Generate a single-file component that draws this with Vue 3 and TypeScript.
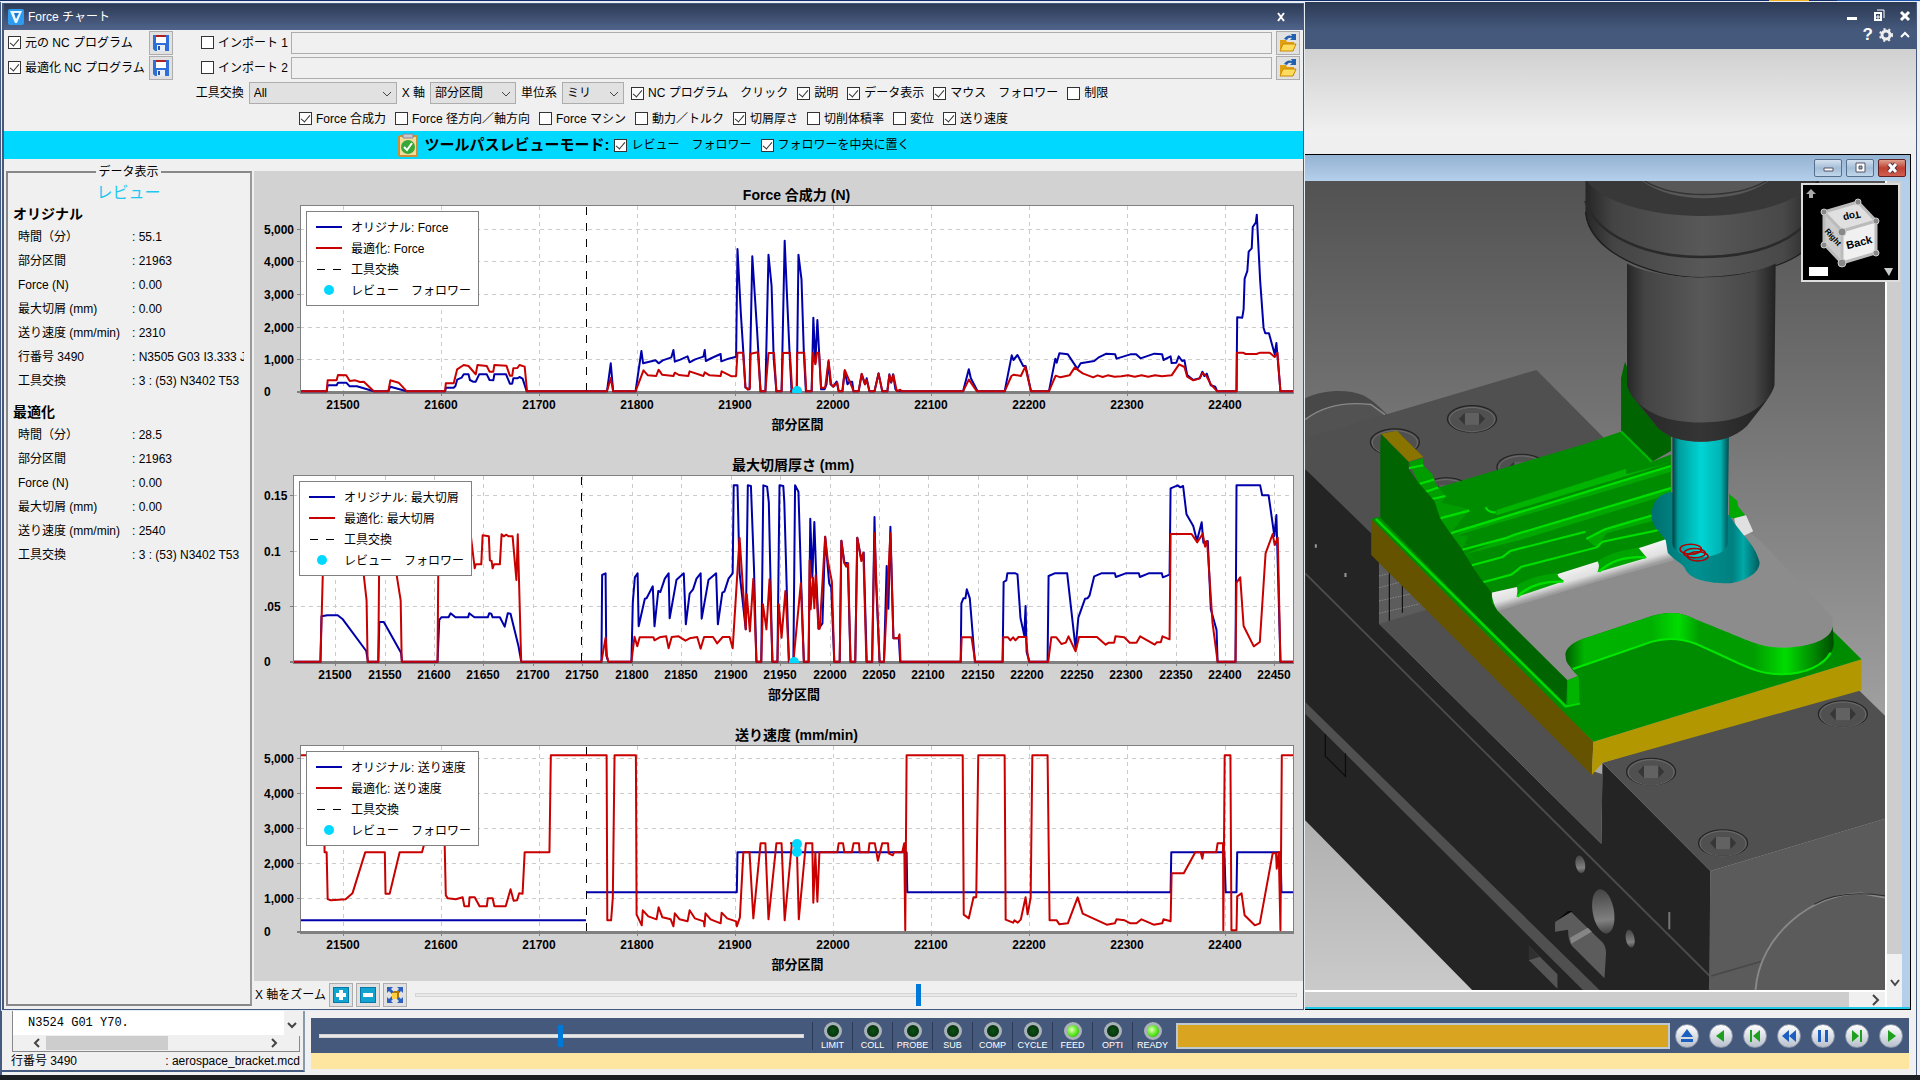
<script setup lang="ts">
import { ref } from 'vue'

interface Option { label: string; on: boolean }
interface Sweep { left: string; right: string }
interface Chart {
  title: string
  legendName: string
  plotLeft: number
  shift: number
  toolChange: number
  xTicks: { x: number; text: string }[]
  yTicks: { y: number; text: string }[]
  blue: Sweep
  red: Sweep
  dots: { x: number; y: number }[]
}

const ticks = (start: number, step: number, first: number, inc: number, count: number) =>
  Array.from({ length: count }, (_, i) => ({ x: Math.round(start + step * i), text: String(first + inc * i) }))

const displayOptions = ref<Option[]>([
  { label: 'NC プログラム　クリック', on: true },
  { label: '説明', on: true },
  { label: 'データ表示', on: true },
  { label: 'マウス　フォロワー', on: true },
  { label: '制限', on: false },
])
const chartOptions = ref<Option[]>([
  { label: 'Force 合成力', on: true },
  { label: 'Force 径方向／軸方向', on: false },
  { label: 'Force マシン', on: false },
  { label: '動力／トルク', on: false },
  { label: '切屑厚さ', on: true },
  { label: '切削体積率', on: false },
  { label: '変位', on: false },
  { label: '送り速度', on: true },
])
const reviewOptions = ref<Option[]>([
  { label: 'レビュー　フォロワー', on: true },
  { label: 'フォロワーを中央に置く', on: true },
])
const programs = ref([
  { label: '元の NC プログラム', on: true, importLabel: 'インポート 1', imported: false, path: '' },
  { label: '最適化 NC プログラム', on: true, importLabel: 'インポート 2', imported: false, path: '' },
])
const zoom = ref(572)
const speed = ref(497)

const readings = [
  {
    name: 'オリジナル',
    rows: [
      ['時間（分）', '55.1'],
      ['部分区間', '21963'],
      ['Force (N)', '0.00'],
      ['最大切屑 (mm)', '0.00'],
      ['送り速度 (mm/min)', '2310'],
      ['行番号 3490', 'N3505 G03 I3.333 J'],
      ['工具交換', '3 : (53) N3402 T53'],
    ],
  },
  {
    name: '最適化',
    rows: [
      ['時間（分）', '28.5'],
      ['部分区間', '21963'],
      ['Force (N)', '0.00'],
      ['最大切屑 (mm)', '0.00'],
      ['送り速度 (mm/min)', '2540'],
      ['工具交換', '3 : (53) N3402 T53'],
    ],
  },
]

const charts: Chart[] = [
  {
    title: 'Force 合成力 (N)',
    legendName: 'Force',
    plotLeft: 46,
    shift: 0,
    toolChange: 332,
    xTicks: ticks(88.5, 98.1, 21500, 100, 10),
    yTicks: [
      { y: 58, text: '5,000' }, { y: 90, text: '4,000' }, { y: 123, text: '3,000' },
      { y: 156, text: '2,000' }, { y: 188, text: '1,000' }, { y: 220, text: '0' },
    ],
    blue: {
      left: '132,661 208,661 211,643 237,643 241,635 265,635 275,646 296,646 345,661 387,661 393,647 441,661 552,661 554,650 577,650 582,645 587,626 600,620 606,610 620,610 624,627 633,632 641,632 651,610 673,610 681,627 692,628 695,610 729,610 740,638 747,638 750,622 762,622 768,618 777,623 789,661 1022,661 1033,577 1040,661 1105,661 1122,540 1127,577 1163,568 1172,577 1184,568 1209,559 1215,537 1219,572 1235,566 1256,556 1262,574 1278,565 1302,557 1306,537 1309,570 1326,561 1352,549 1354,571 1375,563 1397,557 1401,234 1411,432 1419,560 1424,650 1436,655 1444,256 1458,480 1468,661 1482,661 1491,251 1500,345 1506,560 1514,661 1529,661 1538,209 1545,380 1552,540 1558,661 1568,661',
      right: '0,661 20,661 25,251 34,325 41,545 47,661 64,661 69,440 75,575 81,447 88,580 92,655 102,655 108,640 114,572 120,640 128,647 138,632 144,661 155,661 162,600 170,640 176,632 184,632 188,661 203,661 212,610 222,640 227,622 235,661 250,661 262,607 273,661 288,661 294,610 299,635 305,610 312,655 320,661 512,661 529,595 535,622 555,661 635,661 656,553 661,567 673,552 690,585 697,585 713,661 766,661 785,563 789,575 797,547 822,550 850,593 860,577 900,570 912,560 936,548 962,550 966,563 1007,550 1024,550 1037,562 1078,548 1101,550 1105,567 1126,556 1129,576 1143,575 1150,556 1160,570 1167,568 1175,612 1193,627 1212,622 1220,602 1226,615 1233,608 1245,643 1258,647 1264,661 1321,661 1323,439 1338,440 1342,415 1345,323 1353,300 1357,242 1366,232 1369,168 1378,155 1381,131 1391,330 1401,470 1406,487 1417,487 1434,550 1439,516 1451,661 1489,661',
    },
    red: {
      left: '132,661 208,661 211,628 237,628 241,612 265,613 275,630 291,628 305,633 316,632 345,661 387,661 393,628 417,635 441,661 552,661 554,637 577,637 587,595 606,582 620,585 641,610 646,582 673,585 681,602 692,602 695,582 730,584 740,614 747,614 750,592 762,591 768,582 783,587 790,661 1022,661 1033,621 1040,661 1105,661 1128,598 1141,613 1165,615 1172,596 1182,611 1215,615 1219,605 1231,612 1258,615 1262,601 1302,615 1306,604 1320,613 1352,615 1355,601 1384,616 1397,615 1401,545 1417,545 1424,648 1431,656 1437,650 1439,548 1460,544 1468,661 1482,661 1491,546 1507,546 1514,661 1529,661 1533,546 1553,545 1560,661 1568,661',
      right: '0,661 20,661 21,545 42,545 48,661 64,661 68,545 75,580 80,545 86,545 92,650 104,650 114,568 122,640 128,647 140,635 144,661 155,661 162,597 180,640 184,650 188,661 203,661 212,608 222,640 227,627 235,661 250,661 262,608 273,661 288,661 294,612 300,633 306,612 316,661 326,656 330,661 512,661 529,626 553,661 635,661 655,615 662,611 683,615 696,587 713,661 766,661 786,614 800,619 827,613 842,590 866,607 897,619 910,613 925,618 940,613 960,617 980,616 1000,613 1020,617 1040,613 1060,617 1080,613 1100,616 1129,613 1151,580 1167,588 1175,617 1193,628 1212,622 1220,606 1232,615 1245,640 1264,661 1321,661 1322,545 1340,545 1348,549 1380,549 1391,545 1419,545 1434,558 1442,545 1451,661 1489,661',
    },
    dots: [{ x: 543, y: 220 }],
  },
  {
    title: '最大切屑厚さ (mm)',
    legendName: '最大切屑',
    plotLeft: 39,
    shift: 5,
    toolChange: 327,
    xTicks: ticks(81.2, 49.43, 21500, 50, 20),
    yTicks: [
      { y: 54, text: '0.15' }, { y: 110, text: '0.1' }, { y: 165, text: '.05' }, { y: 220, text: '0' },
    ],
    blue: {
      left: '111,647 190,647 193,511 210,508 240,508 255,520 323,615 328,647 358,647 361,528 374,528 424,620 427,647 530,647 535,522 541,514 562,514 568,502 582,514 619,514 622,502 637,514 676,514 680,502 686,503 690,514 711,514 725,542 734,502 742,503 765,600 773,647 1006,647 1008,387 1018,382 1020,628 1026,647 1093,647 1097,470 1103,394 1111,382 1114,541 1132,458 1137,457 1155,421 1160,541 1171,435 1177,438 1190,398 1201,382 1204,517 1224,401 1245,382 1251,535 1262,443 1272,430 1282,398 1294,382 1297,518 1317,401 1339,382 1344,535 1357,440 1363,437 1375,398 1387,382 1390,118 1401,118 1407,380 1425,550 1431,118 1440,120 1449,370 1456,647 1470,647 1476,118 1487,122 1492,170 1502,647 1517,647 1523,118 1534,120 1537,170 1550,647 1568,647',
      right: '0,647 10,647 15,118 25,137 33,410 41,647 55,647 60,218 66,395 72,228 78,400 85,548 96,532 104,272 116,412 122,425 131,647 147,647 152,284 161,350 171,352 179,647 193,647 199,275 211,340 218,320 227,647 243,647 250,213 254,395 265,647 278,647 286,360 291,488 297,242 306,577 322,577 326,647 505,647 507,472 513,457 519,457 523,430 532,457 547,647 629,647 632,408 640,403 643,382 667,382 673,385 682,517 693,568 697,480 700,617 708,647 762,647 765,390 783,382 820,382 845,608 853,515 873,458 880,457 886,449 900,391 921,382 961,382 964,393 993,382 1032,382 1035,393 1061,382 1100,382 1103,394 1123,386 1126,127 1147,118 1155,124 1163,120 1173,205 1193,240 1204,284 1218,229 1223,290 1236,285 1245,490 1262,552 1265,647 1318,647 1321,118 1391,118 1397,148 1416,148 1433,270 1439,207 1451,647 1489,647',
    },
    red: {
      left: '111,647 190,647 197,380 197,300 305,300 315,380 324,463 327,647 358,647 361,300 400,300 411,385 423,463 426,647 530,647 533,270 627,272 638,367 641,355 657,355 661,268 679,271 682,343 687,345 690,367 694,355 711,355 716,265 722,271 730,266 736,271 748,271 759,402 763,265 773,647 1006,647 1018,575 1022,630 1026,647 1093,647 1102,572 1110,601 1117,574 1157,574 1160,583 1175,574 1194,571 1201,607 1210,573 1230,571 1250,584 1262,577 1284,573 1294,608 1304,573 1330,573 1342,592 1358,573 1378,573 1387,607 1407,275 1425,550 1428,445 1437,556 1447,398 1456,647 1470,647 1475,475 1485,550 1494,400 1503,647 1517,647 1521,475 1529,575 1540,435 1551,647 1568,647',
      right: '0,647 10,647 32,412 41,647 55,647 58,343 61,490 68,395 72,487 76,388 84,548 88,548 104,272 112,345 124,407 131,647 147,647 152,284 160,350 166,362 172,352 179,647 193,647 199,275 211,345 217,320 226,647 243,647 250,262 265,647 278,647 297,262 306,577 320,577 324,565 327,647 505,647 508,574 537,574 548,647 629,647 631,574 645,574 652,583 660,574 667,583 676,573 698,573 703,625 708,647 764,647 773,574 788,574 803,594 816,590 824,571 845,616 855,573 908,573 934,596 943,590 959,590 963,571 989,574 1005,590 1025,590 1036,571 1079,596 1085,589 1097,589 1102,571 1123,580 1126,264 1188,264 1205,289 1221,263 1228,302 1234,285 1250,530 1265,647 1318,647 1321,410 1332,394 1342,540 1372,601 1390,588 1407,322 1428,264 1434,297 1443,275 1451,647 1489,647',
    },
    dots: [{ x: 540, y: 221 }],
  },
  {
    title: '送り速度 (mm/min)',
    legendName: '送り速度',
    plotLeft: 46,
    shift: 5,
    toolChange: 332,
    xTicks: ticks(88.5, 98.1, 21500, 100, 10),
    yTicks: [
      { y: 47, text: '5,000' }, { y: 82, text: '4,000' }, { y: 117, text: '3,000' },
      { y: 152, text: '2,000' }, { y: 187, text: '1,000' }, { y: 220, text: '0' },
    ],
    blue: {
      left: '132,613 961,613 M963,529 1399,529 1401,409 1568,409',
      right: '0,409 345,409 347,529 1126,529 1128,409 1285,409 1289,529 1321,529 1323,409 1451,409 1454,529 1489,529',
    },
    red: {
      left: '132,118 200,118 202,409 208,409 211,549 220,553 263,550 283,532 320,409 377,409 379,533 391,533 420,409 485,409 500,350 550,350 554,538 560,547 583,550 603,544 608,571 621,571 623,544 638,544 652,571 673,571 676,547 690,547 695,571 728,571 742,520 751,554 761,553 767,532 777,533 783,409 855,409 859,118 1021,118 1023,613 1034,613 1039,545 1044,118 1106,118 1108,596 1123,628 1126,583 1142,601 1166,610 1172,574 1183,604 1207,610 1215,631 1219,592 1233,610 1256,616 1262,583 1277,607 1303,616 1305,631 1308,592 1323,610 1352,622 1355,590 1371,607 1397,616 1399,631 1408,604 1418,409 1436,409 1447,607 1468,382 1482,382 1491,610 1514,382 1529,382 1538,613 1559,382 1568,382',
      right: '0,382 20,382 26,610 47,382 66,382 69,560 75,409 81,557 87,409 140,409 144,382 157,382 161,409 183,409 188,382 204,382 206,409 232,409 235,382 251,382 260,434 273,382 290,382 292,412 304,418 308,409 332,409 338,382 341,643 345,118 511,118 514,596 529,607 543,544 551,544 557,118 635,118 638,611 660,620 664,613 674,620 683,610 697,544 703,595 712,545 717,118 762,118 768,613 789,613 797,625 822,622 851,544 866,593 937,626 961,622 966,610 990,613 1007,622 1025,622 1040,610 1076,626 1101,622 1105,610 1126,616 1129,472 1165,472 1199,409 1215,409 1220,428 1223,409 1261,409 1265,382 1281,382 1282,643 1286,118 1303,118 1306,643 1321,643 1323,541 1336,532 1345,598 1375,628 1390,622 1428,412 1438,412 1440,458 1446,409 1451,643 1455,118 1489,118',
    },
    dots: [{ x: 543, y: 133 }, { x: 543, y: 141 }],
  },
]

const lamps = [
  { name: 'LIMIT', lit: false }, { name: 'COLL', lit: false }, { name: 'PROBE', lit: false },
  { name: 'SUB', lit: false }, { name: 'COMP', lit: false }, { name: 'CYCLE', lit: false },
  { name: 'FEED', lit: true }, { name: 'OPTI', lit: false }, { name: 'READY', lit: true },
]

const green = '#1ea01e'
const blue = '#1d5fc0'
const transport = [
  { name: 'リセット', color: blue, d: 'M12 5 L18 13 H6Z M6 15 H18 V18 H6Z' },
  { name: '逆再生', color: green, d: 'M15 6 V18 L7 12Z' },
  { name: '先頭へ', color: green, d: 'M7 6 H9 V18 H7Z M17 6 V18 L10 12Z' },
  { name: '早戻し', color: blue, d: 'M12 6 V18 L5 12Z M19 6 V18 L12 12Z' },
  { name: '一時停止', color: blue, d: 'M7 6 H10 V18 H7Z M14 6 H17 V18 H14Z' },
  { name: '一段進む', color: green, d: 'M7 6 V18 L14 12Z M15 6 H17 V18 H15Z' },
  { name: '再生', color: green, d: 'M9 6 V18 L17 12Z' },
]

const rearBolts = [[435, 1170], [240, 1235], [560, 1306], [370, 1372]]
const frontBolts = [[1373, 519], [888, 692], [1070, 906]]
</script>

<template>
  <div class="desktop">
    <div class="strip"><i class="strip-gold"></i><i class="strip-blue"></i></div>

    <main class="app">
      <header class="app-head">
        <div class="head-row">
          <button aria-label="最小化"><svg width="14" height="14"><path d="M2 8H12V11H2Z" fill="#fff" /></svg></button>
          <button aria-label="元に戻す"><svg width="14" height="14" fill="none" stroke="#fff" stroke-width="2"><path d="M3 4H9V11H3Z" /><path d="M5 1H12V9" stroke-width="1" /><path d="M5 7H7V9H5Z" stroke-width="1" /></svg></button>
          <button aria-label="閉じる"><svg width="12" height="14" stroke="#fff" stroke-width="3"><path d="M2 3L10 11M10 3L2 11" /></svg></button>
        </div>
        <div class="head-row tools">
          <button class="help">?</button>
          <button aria-label="設定">
            <svg width="14" height="14"><circle cx="7" cy="7" r="4" fill="none" stroke="#eee" stroke-width="3" /><circle cx="7" cy="7" r="6" fill="none" stroke="#eee" stroke-width="2" stroke-dasharray="2 3" /></svg>
          </button>
          <button aria-label="リボンを折りたたむ"><svg width="12" height="14" fill="none" stroke="#fff" stroke-width="2"><path d="M2 9L6 5L10 9" /></svg></button>
        </div>
      </header>
      <div class="ribbon"></div>

      <section class="workspace">
        <div class="doc">
          <div class="doc-head">
            <button aria-label="最小化"><svg width="27" height="16"><path d="M9 8H18V11H9Z" fill="#fff" stroke="#556" /></svg></button>
            <button aria-label="最大化"><svg width="27" height="16"><path d="M9 3H18V12H9Z" fill="#fff" stroke="#556" /><path d="M12 6H15V9H12Z" fill="#8ab" stroke="#556" /></svg></button>
            <button class="doc-close" aria-label="閉じる"><svg width="27" height="16"><path d="M10 4L17 12M17 4L10 12" stroke="#534" stroke-width="5" /><path d="M10 4L17 12M17 4L10 12" stroke="#fff" stroke-width="3" /></svg></button>
          </div>
          <div class="doc-body">
            <div class="scene-col">
              <svg class="scene" viewBox="1305 180 580 810" preserveAspectRatio="xMinYMin slice" role="img" aria-label="加工シミュレーション">
                <defs>
                  <linearGradient id="bg" x2="0" y2="1"><stop offset="0" stop-color="#525252" /><stop offset=".45" stop-color="#868686" /><stop offset="1" stop-color="#cacaca" /></linearGradient>
                  <linearGradient id="holder"><stop offset="0" stop-color="#262626" /><stop offset=".12" stop-color="#444" /><stop offset=".5" stop-color="#585858" /><stop offset=".85" stop-color="#484848" /><stop offset="1" stop-color="#222" /></linearGradient>
                  <linearGradient id="cone"><stop offset="0" stop-color="#262626" /><stop offset=".5" stop-color="#353535" /><stop offset="1" stop-color="#222" /></linearGradient>
                  <linearGradient id="cutter"><stop offset="0" stop-color="#003c3c" /><stop offset=".1" stop-color="#009c9c" /><stop offset=".5" stop-color="#00d4d4" /><stop offset=".85" stop-color="#00b4b4" /><stop offset="1" stop-color="#004c4c" /></linearGradient>
                  <linearGradient id="cavity"><stop offset="0" stop-color="#007070" /><stop offset=".4" stop-color="#009090" /><stop offset=".75" stop-color="#008080" /><stop offset=".85" stop-color="#00a8a8" /><stop offset="1" stop-color="#005c5c" /></linearGradient>
                  <linearGradient id="wall"><stop offset="0" stop-color="#006000" /><stop offset=".07" stop-color="#00b400" /><stop offset=".32" stop-color="#00b000" /><stop offset=".42" stop-color="#00dc00" /><stop offset=".5" stop-color="#009c00" /><stop offset=".7" stop-color="#009c00" /><stop offset=".82" stop-color="#00dc00" /><stop offset="1" stop-color="#004c00" /></linearGradient>
                  <linearGradient id="channel" gradientUnits="userSpaceOnUse" x1="700" y1="78" x2="718" y2="130"><stop offset="0" stop-color="#f2f2f2" /><stop offset=".6" stop-color="#e0e0e0" /><stop offset="1" stop-color="#9c9c9c" /></linearGradient>
                  <linearGradient id="hole" x2="0" y2="1"><stop offset="0" stop-color="#444" /><stop offset=".7" stop-color="#808080" /><stop offset="1" stop-color="#444" /></linearGradient>
                </defs>
                <rect x="1305" y="180" width="580" height="810" fill="url(#bg)" />

                <!-- rear jaw of the vise -->
                <g transform="translate(1300 0) scale(.39541 .35714)">
                  <path d="M13,1112C60,1088 120,1086 160,1104C190,1122 208,1145 222,1160L13,1240Z" fill="#484848" />
                  <path d="M13,1172C60,1132 120,1122 180,1130L222,1160L13,1240Z" fill="#525252" />
                  <path d="M13,1172C60,1132 120,1122 180,1130L215,1158" fill="none" stroke="#888" stroke-width="4" />
                  <path d="M13,1225L598,1033L900,1370V1650H280L13,1310Z" fill="#505050" />
                  <g v-for="b in rearBolts" :key="b[0]" :transform="`translate(${b[0]} ${b[1]})`">
                    <ellipse rx="62" ry="37" fill="#505050" stroke="#222" stroke-width="3" />
                    <ellipse cy="2" rx="57" ry="34" fill="none" stroke="#777" stroke-width="2" />
                    <path d="M-33,0L-18,-17H18L33,0L18,17H-18Z" fill="#363636" /><path d="M-18,-17H18V17H-18Z" fill="#606060" />
                  </g>
                </g>

                <!-- vise body, front jaw and stock -->
                <g transform="translate(1300 540) scale(.39541 .33333)">
                  <path d="M13,-216L200,0V248L762,908L765,665L1038,990V1360H446L13,838Z" fill="#242424" />
                  <path d="M200,40L330,205L200,250Z" fill="#5c5c5c" />
                  <path d="M200,105L260,88M200,140L290,112M200,180L320,148M200,217L340,178" stroke="#999" stroke-width="2" stroke-dasharray="4 3" />
                  <path d="M226,60V240M259,80V215" stroke="#111" stroke-width="3" />
                  <path d="M200,248L325,205L740,690L765,700L762,908Z" fill="#505050" />
                  <path d="M13,97L1038,1307" stroke="#4c4c4c" stroke-width="5" />
                  <path d="M13,483L760,1350H718L13,518Z" fill="#505050" />
                  <path d="M64,580V645L115,706V637" fill="none" stroke="#0c0c0c" stroke-width="3" />
                  <path d="M40,10V20M115,96V108" stroke="#999" stroke-width="5" />
                  <ellipse cx="709" cy="970" rx="12" ry="27" fill="url(#hole)" transform="rotate(-8 709 970)" />
                  <ellipse cx="767" cy="1111" rx="27" ry="67" fill="url(#hole)" transform="rotate(-8 767 1111)" />
                  <ellipse cx="835" cy="1193" rx="11" ry="27" fill="url(#hole)" transform="rotate(-8 835 1193)" />
                  <path d="M645,1143L685,1112L766,1205Q774,1218 774,1235L770,1312L688,1215Q678,1200 678,1166L645,1172Z" fill="#5c5c5c" />
                  <path d="M645,1143L678,1110H690L650,1138Z" fill="#080808" />
                  <path d="M683,1190L728,1160L738,1172L686,1208Z" fill="#868686" />
                  <path d="M579,1215L651,1300V1343L579,1258Z" fill="#555" /><path d="M579,1215L606,1247L579,1258Z" fill="#303030" />
                  <path d="M934,1113V1165" stroke="#777" stroke-width="5" />
                  <path d="M765,665L1405,438L1480,525V833L1038,990Z" fill="#505050" />
                  <path d="M1038,990L1480,833V1360H1034Z" fill="#5b5b5b" />
                  <path d="M1040,1305L1170,1260" stroke="#484848" stroke-width="4" />
                  <path d="M1152,1350C1160,1180 1300,1055 1420,1057L1480,1070" fill="none" stroke="#888" stroke-width="5" />
                  <path d="M1300,1090C1340,1062 1400,1050 1480,1064" fill="none" stroke="#2c2c2c" stroke-width="3" />
                  <g v-for="b in frontBolts" :key="b[0]" :transform="`translate(${b[0]} ${b[1]})`">
                    <ellipse rx="62" ry="40" fill="#505050" stroke="#222" stroke-width="3" />
                    <ellipse cy="2" rx="58" ry="38" fill="none" stroke="#777" stroke-width="2" />
                    <path d="M-33,0L-18,-19H18L33,0L18,19H-18Z" fill="#363636" /><path d="M-18,-19H18V19H-18Z" fill="#626262" />
                  </g>
                  <path d="M180,-66V42L738,702L742,602L215,-60Z" fill="#655300" />
                  <path d="M742,602L1420,355V448L765,665L738,702Z" fill="#b39700" />
                  <path d="M180,-66L742,602L1420,355L1348,270L1225,340L1000,250L900,-60L350,-150L200,-72Z" fill="#008c00" />
                  <path d="M485,155L925,-20L1100,-60L1165,0L1347,230V262C1345,300 1280,322 1225,320C1160,318 1150,305 1000,235C960,212 930,212 890,225L730,288C680,305 670,330 672,345C675,370 690,390 703,405L676,418L500,210Z" fill="#8c8c8c" />
                  <path d="M672,345C670,330 680,305 730,288L890,225C930,212 960,212 1000,235C1150,305 1160,320 1225,320C1290,318 1345,295 1347,255L1350,310C1345,360 1290,400 1220,402C1150,400 1120,370 1000,308C960,290 925,290 890,302L690,382C675,370 672,360 672,345Z" fill="url(#wall)" />
                  <path d="M690,384L890,302C925,290 960,290 1000,308C1120,370 1150,400 1220,400C1280,398 1325,372 1342,335" fill="none" stroke="#00e800" stroke-width="6" />
                </g>

                <!-- stepped back of the part -->
                <g transform="translate(1300 0) scale(.39541 .35714)">
                  <path d="M350,1362L712,1243L815,1205L890,1290L938,1270V1525L860,1530L750,1572L550,1640L485,1657L430,1568Z" fill="#008c00" />
                  <path d="M812,1205V1055L822,1010L845,1080L938,1180V1260L890,1290Z" fill="#006400" />
                  <path d="M812,1205L890,1290" stroke="#00b800" stroke-width="6" />
                  <path d="M497,1425L825,1310V1325L938,1292L497,1440Z" fill="#00b400" />
                  <path d="M435,1470L938,1300V1318L385,1500Z" fill="#00a800" />
                  <path d="M525,1500L938,1362V1380L560,1508L415,1550Z" fill="#00a800" />
                  <path d="M725,1508Q760,1470 905,1436V1452L775,1490L750,1530Z" fill="#00a800" />
                  <path d="M275,1290L312,1280V1300L335,1325L340,1345L368,1388L358,1405L430,1424L380,1490L425,1500L410,1540L450,1570L400,1540L340,1450Z" fill="#009c00" />
                  <g fill="none" stroke="#00e000" stroke-width="6">
                    <path d="M356,1448L428,1427M470,1418Q475,1432 495,1432M382,1490L938,1302" />
                    <path d="M408,1537L520,1504L540,1495L938,1364" />
                    <path d="M435,1580L512,1557L532,1540L722,1486M724,1506L770,1480L905,1436" />
                    <path d="M460,1628L535,1606L560,1584L750,1530L765,1514L905,1482" />
                    <path d="M275,1308L312,1300M303,1352L340,1340M318,1374L350,1362M328,1396L368,1386" />
                  </g>
                  <path d="M1085,1380L1106,1400L1108,1415L1126,1440L1098,1450L1085,1445Z" fill="#00a800" />
                  <path d="M1098,1448L1128,1440L1146,1485L1118,1500Q1102,1480 1098,1448Z" fill="#e0e0e0" />
                </g>
                <g transform="translate(1300 540) scale(.39541 .33333)">
                  <path d="M484,155L550,138L650,100L750,62L860,20L925,-5L945,58L750,122L500,210Q488,190 484,155Z" fill="url(#channel)" />
                  <path d="M548,168Q552,142 547,135Q580,105 650,97L654,108L668,120Z" fill="#00a400" />
                  <path d="M550,167Q590,118 666,122" fill="none" stroke="#00e000" stroke-width="7" />
                  <path d="M752,94Q760,72 752,60Q790,30 856,20L877,50Z" fill="#00a400" />
                  <path d="M756,92Q800,42 875,49" fill="none" stroke="#00e000" stroke-width="7" />
                  <path d="M203,-295L205,-321L275,-238V-216L300,-174L340,-120L355,-66L380,-24L410,25L435,75L460,118L485,155V185L500,210L676,418L672,498L203,-70Z" fill="#006400" />
                  <path d="M192,-66L672,496L708,487" fill="none" stroke="#00d800" stroke-width="7" />
                  <path d="M676,418L705,405L707,485L676,492Z" fill="#00b400" />
                </g>

                <!-- cutter and tool holder -->
                <g transform="translate(1300 0) scale(.39541 .35714)">
                  <path d="M205,1212L245,1203L312,1277L275,1290Z" fill="#8a7400" />
                  <path d="M938,1375C880,1385 880,1460 905,1482L925,1510L930,1545C950,1570 970,1575 975,1592C990,1628 1060,1632 1090,1630C1135,1622 1165,1595 1162,1570C1150,1520 1120,1500 1085,1440Z" fill="url(#cavity)" />
                  <path d="M942,1190V1520C945,1570 1075,1570 1081,1520L1085,1190Z" fill="url(#cutter)" />
                  <path d="M722,500V590C722,690 860,774 1015,774C1160,774 1265,720 1285,690L1312,600V500Z" fill="url(#holder)" />
                  <path d="M722,500C760,560 880,602 1015,602C1140,602 1250,570 1312,500Z" fill="#383838" />
                  <path d="M860,500C900,535 960,552 1020,552C1090,552 1150,535 1190,500Z" fill="#585858" />
                  <path d="M722,560C750,660 880,717 1015,717C1140,717 1240,680 1290,610" fill="none" stroke="#2a2a2a" stroke-width="7" />
                  <path d="M870,503C910,530 960,542 1020,542C1080,542 1140,530 1180,503" fill="none" stroke="#333" stroke-width="4" />
                  <path d="M722,590C730,700 880,774 1015,774C1150,774 1250,730 1285,690" fill="none" stroke="#1c1c1c" stroke-width="3" />
                  <path d="M827,735C880,765 960,774 1015,774C1100,774 1160,758 1203,735L1200,1075C1196,1100 1170,1130 1130,1190C1100,1222 1060,1234 1015,1234C965,1234 930,1222 905,1195C860,1130 835,1110 827,1075Z" fill="url(#holder)" />
                  <path d="M835,1098C870,1155 930,1180 1015,1180C1100,1180 1160,1155 1194,1095C1180,1120 1160,1150 1130,1190C1100,1222 1060,1234 1015,1234C965,1234 930,1222 905,1195Z" fill="url(#cone)" />
                  <g fill="none" stroke="#b00000" stroke-width="4">
                    <ellipse cx="988" cy="1535" rx="27" ry="14" /><ellipse cx="998" cy="1546" rx="27" ry="13" /><ellipse cx="1006" cy="1555" rx="26" ry="13" />
                  </g>
                </g>
              </svg>
              <div class="hbar"><div class="hthumb"></div><svg width="36" height="15"><path d="M24 3L29 8L24 13" fill="none" stroke="#444" stroke-width="2" /></svg></div>
            </div>
            <div class="vbar"><div class="vthumb"></div><svg width="15" height="36"><path d="M4 26L8 31L12 26" fill="none" stroke="#444" stroke-width="2" /></svg></div>
            <svg class="cube" viewBox="0 0 99 99">
              <rect x="1" y="1" width="97" height="97" fill="#000" stroke="#ddd" stroke-width="2" />
              <path d="M5 11L10 6L15 11ZM8 11H12V15H8Z" fill="#aaa" />
              <path d="M23 29L57 19L75 38L41 48Z" fill="#e0e0e0" /><path d="M23 29L41 48V80L23 61Z" fill="#ccc" /><path d="M41 48L75 38V70L41 80Z" fill="#f0f0f0" />
              <path d="M23 29L57 19L75 38L41 48ZV61L41 80V48M41 80L75 70V38" fill="none" stroke="#bbb" stroke-width="3" />
              <g fill="#888" stroke="#ccc"><circle cx="23" cy="29" r="3" /><circle cx="57" cy="19" r="3" /><circle cx="75" cy="38" r="3" /><circle cx="41" cy="49" r="4" /><circle cx="23" cy="62" r="3" /><circle cx="75" cy="70" r="3" /><circle cx="41" cy="80" r="4" /></g>
              <text x="59" y="63" transform="rotate(-14 59 63)" font-size="11">Back</text>
              <text x="50" y="30" transform="rotate(166 50 30)" font-size="10">Top</text>
              <text x="30" y="56" transform="rotate(48 30 56)" font-size="8">Right</text>
              <path d="M8 84H27V93H8Z" fill="#fff" /><path d="M83 85H92L88 93Z" fill="#ccc" />
            </svg>
          </div>
        </div>
      </section>

      <footer class="foot">
        <div class="program">
          <div class="listing">
            <code>N3524 G01 Y70.</code>
            <svg width="16" height="26"><path d="M4 13L8 17L12 13" fill="none" stroke="#444" stroke-width="2" /></svg>
          </div>
          <div class="lscroll">
            <svg width="14" height="14"><path d="M9 3L5 7L9 11" fill="none" stroke="#444" stroke-width="2" /></svg>
            <i></i>
            <svg width="14" height="14"><path d="M5 3L9 7L5 11" fill="none" stroke="#444" stroke-width="2" /></svg>
          </div>
          <div class="status"><span>行番号 3490</span><span>: aerospace_bracket.mcd</span></div>
        </div>
        <div class="machine">
          <div class="controls">
            <input v-model="speed" class="speed" type="range" min="0" max="1000" aria-label="速度" />
            <div class="lamps">
              <div v-for="l in lamps" :key="l.name" class="lamp">
                <i :class="{ lit: l.lit }"></i><span>{{ l.name }}</span>
              </div>
            </div>
            <div class="progress"></div>
            <div class="transport">
              <button v-for="t in transport" :key="t.name" :aria-label="t.name">
                <svg viewBox="0 0 24 24" width="24" height="24"><path :d="t.d" :fill="t.color" /></svg>
              </button>
            </div>
          </div>
          <div class="message"></div>
        </div>
      </footer>
    </main>
    <div class="taskbar"></div>

    <section class="force">
      <header class="force-head">
        <svg width="16" height="16"><rect width="16" height="16" rx="2" fill="#2d9cf0" /><path d="M2 2H14L9 14H7Z" fill="#e8f6ff" /><path d="M6 4H11L8 10Z" fill="#1c78d0" /></svg>
        <h1>Force チャート</h1>
        <button aria-label="閉じる"><svg width="12" height="12" stroke="#fff" stroke-width="2"><path d="M3 2L9 10M9 2L3 10" /></svg></button>
      </header>

      <div v-for="p in programs" :key="p.label" class="row files">
        <label class="tick"><input v-model="p.on" type="checkbox" />{{ p.label }}</label>
        <button class="tool" aria-label="保存">
          <svg width="16" height="16"><path d="M0 0H16V16H2L0 14Z" fill="#2f6fd8" /><path d="M3 1H13V8H3Z" fill="#fff" /><path d="M3 0H13V2H3Z" fill="#b02020" /><path d="M4 10H12V16H4Z" fill="#e8eef8" /><path d="M5 11H7V15H5Z" fill="#2456a8" /></svg>
        </button>
        <label class="tick import"><input v-model="p.imported" type="checkbox" />{{ p.importLabel }}</label>
        <input v-model="p.path" class="path" type="text" :aria-label="p.importLabel" />
        <button class="tool" aria-label="開く">
          <svg width="18" height="18"><path d="M1 6H7L8 8H15V17H1Z" fill="#e0a010" /><path d="M4 10H17L14 17H1Z" fill="#ffdc60" stroke="#c88a00" /><path d="M5 5Q8 0 13 2L12 0H17V6H11L13 4Q9 3 8 6Z" fill="#2360b0" /></svg>
        </button>
      </div>

      <div class="row centre axis">
        <label for="toolchange">工具交換</label>
        <span class="pick tc"><select id="toolchange"><option>All</option></select><svg width="10" height="6"><path d="M1 1L5 5L9 1" /></svg></span>
        <label for="xaxis">X 軸</label>
        <span class="pick xa"><select id="xaxis"><option>部分区間</option></select><svg width="10" height="6"><path d="M1 1L5 5L9 1" /></svg></span>
        <label for="units">単位系</label>
        <span class="pick un"><select id="units"><option>ミリ</option></select><svg width="10" height="6"><path d="M1 1L5 5L9 1" /></svg></span>
        <div class="ticks">
          <label v-for="o in displayOptions" :key="o.label" class="tick"><input v-model="o.on" type="checkbox" />{{ o.label }}</label>
        </div>
      </div>
      <div class="row centre ticks">
        <label v-for="o in chartOptions" :key="o.label" class="tick"><input v-model="o.on" type="checkbox" />{{ o.label }}</label>
      </div>
      <div class="review">
        <svg width="22" height="24"><rect x="1" y="2" width="20" height="22" rx="2" fill="#c89038" /><rect x="3" y="4" width="16" height="18" fill="#f4dc9c" /><path d="M6 1H16V5H6Z" fill="#c8c8d0" stroke="#889" /><circle cx="11" cy="14" r="7" fill="#38a838" /><path d="M7 14L10 17L15 10" fill="none" stroke="#fff" stroke-width="2" /></svg>
        <strong>ツールパスレビューモード:</strong>
        <div class="ticks">
          <label v-for="o in reviewOptions" :key="o.label" class="tick"><input v-model="o.on" type="checkbox" />{{ o.label }}</label>
        </div>
      </div>

      <div class="body">
        <fieldset class="data">
          <legend>データ表示</legend>
          <p class="mode">レビュー</p>
          <section v-for="g in readings" :key="g.name">
            <h2>{{ g.name }}</h2>
            <dl>
              <template v-for="r in g.rows" :key="r[0]"><dt>{{ r[0] }}</dt><dd>: {{ r[1] }}</dd></template>
            </dl>
          </section>
        </fieldset>

        <div class="right">
          <div class="charts">
            <svg v-for="(c, i) in charts" :key="c.title" class="chart" viewBox="0 0 1049 270">
              <text class="title" :x="(c.plotLeft + 1039) / 2" y="29">{{ c.title }}</text>
              <rect :x="c.plotLeft" y="34" :width="1039 - c.plotLeft" height="188" fill="#fff" />
              <g class="grid">
                <path v-for="t in c.xTicks" :key="t.x" :d="`M${t.x} 35V221`" />
                <path v-for="t in c.yTicks" :key="t.y" :d="`M${c.plotLeft} ${t.y}H1039`" />
              </g>
              <path :d="`M${c.plotLeft - 3} 221H1039`" stroke="#808080" stroke-width="2" />
              <path class="crisp" :d="`M${c.toolChange} 36V221`" stroke="#000" stroke-dasharray="8 8" />
              <g class="trace">
                <g :transform="`translate(1 ${c.shift}) scale(.34439 .33333)`">
                  <path :d="'M' + c.blue.left" stroke="#0000aa" />
                </g>
                <g :transform="`translate(536 ${c.shift}) scale(.33801 .33333)`">
                  <path :d="'M' + c.blue.right" stroke="#0000aa" />
                </g>
                <g :transform="`translate(1 ${c.shift}) scale(.34439 .33333)`">
                  <path :d="'M' + c.red.left" stroke="#c80000" />
                </g>
                <g :transform="`translate(536 ${c.shift}) scale(.33801 .33333)`">
                  <path :d="'M' + c.red.right" stroke="#c80000" />
                </g>
              </g>
              <clipPath :id="'plot' + i"><rect x="30" y="34" width="1009" height="188" /></clipPath>
              <g :clip-path="`url(#plot${i})`">
                <circle v-for="d in c.dots" :key="d.y" :cx="d.x" :cy="d.y" r="5" fill="#00d8ff" />
              </g>
              <rect class="crisp" :x="c.plotLeft" y="34" :width="1039 - c.plotLeft" height="188" fill="none" stroke="#808080" />
              <g class="axis-text">
                <template v-for="t in c.yTicks" :key="t.y">
                  <text x="10" :y="t.y + 5">{{ t.text }}</text>
                  <path class="crisp" :d="`M${c.plotLeft - 3} ${t.y}H${c.plotLeft}`" stroke="#808080" />
                </template>
                <template v-for="t in c.xTicks" :key="t.x">
                  <text class="mid" :x="t.x" y="238">{{ t.text }}</text>
                  <path class="crisp" :d="`M${t.x} 222V225`" stroke="#808080" />
                </template>
              </g>
              <text class="axis-name" :x="(c.plotLeft + 1041) / 2" y="258">部分区間</text>
              <g class="legend" :transform="`translate(${c.plotLeft + 6} 40)`">
                <rect class="crisp" width="172" height="94" fill="#fff" stroke="#808080" />
                <path d="M10 16H36" stroke="#0000aa" stroke-width="2" />
                <path d="M10 37H36" stroke="#c80000" stroke-width="2" />
                <path class="crisp" d="M11 58H19M27 58H35" stroke="#000" />
                <circle cx="23" cy="79" r="5" fill="#00d8ff" />
                <text x="45" y="21">オリジナル: {{ c.legendName }}</text>
                <text x="45" y="42">最適化: {{ c.legendName }}</text>
                <text x="45" y="63">工具交換</text>
                <text x="45" y="84">レビュー　フォロワー</text>
              </g>
            </svg>
          </div>
          <div class="zoombar">
            <label for="zoom">X 軸をズーム</label>
            <button class="tool" aria-label="拡大"><svg width="16" height="16"><rect width="16" height="16" fill="#0878a8" /><rect x="1" y="1" width="14" height="14" fill="#12a4d0" /><path d="M6 3H10V6H13V10H10V13H6V10H3V6H6Z" fill="#fff" /></svg></button>
            <button class="tool" aria-label="縮小"><svg width="16" height="16"><rect width="16" height="16" fill="#0878a8" /><rect x="1" y="1" width="14" height="14" fill="#12a4d0" /><path d="M3 6H13V10H3Z" fill="#fff" /></svg></button>
            <button class="tool" aria-label="全体表示"><svg width="16" height="16"><path d="M0 0H6L4 2L7 5L5 7L2 4L0 6ZM16 0H10L12 2L9 5L11 7L14 4L16 6ZM0 16H6L4 14L7 11L5 9L2 12L0 10ZM16 16H10L12 14L9 11L11 9L14 12L16 10Z" fill="#2c60c0" /><path d="M5 6L7 4H12V10L10 12H5Z" fill="#b07800" /><path d="M5 6H10V12H5Z" fill="#ffd040" /></svg></button>
            <input id="zoom" v-model="zoom" type="range" min="0" max="1000" />
          </div>
        </div>
      </div>
    </section>
  </div>
</template>

<style>
body { margin: 0; background: #14295a; }
</style>

<style scoped>
.desktop {
  position: relative;
  display: flex;
  flex-direction: column;
  height: 100vh;
  overflow: hidden;
  font: 12px/16px "Liberation Sans", "Noto Sans CJK JP", sans-serif;
  color: #000;
  background: #f0f0f0;
}
.desktop * { box-sizing: border-box; }
button { padding: 0; border: 0; background: none; font: inherit; color: inherit; display: inline-flex; align-items: center; justify-content: center; }
svg { display: block; flex: none; }
h1, h2, p, dl, dd { margin: 0; font: inherit; }

.strip { display: flex; justify-content: flex-end; height: 2px; background: #14306c; border-bottom: 1px solid #e8ecf4; }
.strip-gold { width: 40px; background: #f0b020; margin-right: 28px; }
.strip-blue { width: 83px; background: #1c58b0; }

.app { flex: 1; min-height: 0; display: flex; flex-direction: column; background: #f0f0f0; margin-right: 3px; border-right: 1px solid #445a80; border-left: 2px solid #445a80; }
.app-head { height: 47px; background: linear-gradient(#2c3a54, #45597c 60%, #45597c); color: #fff; padding-top: 4px; }
.head-row { display: flex; justify-content: flex-end; gap: 13px; height: 19px; align-items: center; padding-right: 5px; }
.head-row.tools { gap: 6px; height: 20px; }
.help { font-size: 17px; font-weight: bold; }
.ribbon { height: 105px; background: linear-gradient(#d0d0d0, #f0f0f0 80%, #eee); }

.workspace { flex: 1; min-height: 0; display: flex; justify-content: flex-end; padding-right: 5px; }
.doc { width: 606px; display: flex; flex-direction: column; border: solid #000; border-width: 1px 1px 1px 0; background: #b4cfea; }
.doc-head { display: flex; justify-content: flex-end; align-items: center; gap: 4px; height: 26px; padding-right: 4px; background: linear-gradient(#94b2d2, #b4cfea); }
.doc-head button { width: 28px; height: 18px; border: 1px solid #56708c; border-radius: 2px; background: linear-gradient(#d4e2f0, #a4bed8 50%, #c0d6ea); }
.doc-head .doc-close { background: linear-gradient(#e0a090, #c04030 50%, #d06050); border-color: #602020; }
.doc-body { position: relative; flex: 1; min-height: 0; display: flex; padding-right: 8px; border-bottom: 2px solid #20c8e8; }
.scene-col { flex: 1; min-width: 0; display: flex; flex-direction: column; }
.scene { flex: 1; width: 100%; min-height: 0; }
.hbar { height: 17px; border-top: 2px solid #fff; display: flex; background: #f0f0f0; }
.hthumb { flex: 1; background: #cdcdcd; }
.vbar { width: 17px; border-left: 2px solid #fff; display: flex; flex-direction: column; background: #f0f0f0; padding-bottom: 17px; }
.vthumb { flex: 1; background: #cdcdcd; }
.cube { position: absolute; right: 10px; top: 2px; width: 99px; height: 99px; }
.cube text { font-weight: bold; text-anchor: middle; }

.foot { display: flex; height: 65px; gap: 6px; padding-right: 7px; }
.program { width: 303px; padding: 0 3px 0 9px; border-right: 2px solid #8899aa; border-bottom: 2px solid #445a80; margin-bottom: 3px; }
.listing { display: flex; justify-content: space-between; align-items: center; height: 25px; margin-left: 1px; border-left: 1px solid #888; padding-left: 15px; background: #fff; }
.listing code { font: 12px/20px "Liberation Mono", monospace; }
.listing svg { background: #f0f0f0; }
.lscroll { display: flex; align-items: center; height: 17px; margin-left: 1px; padding: 0 18px 0 17px; border: 1px solid #888; border-top: 0; }
.lscroll i { width: 122px; height: 14px; margin-left: 2px; background: #cdcdcd; margin-right: auto; }
.status { display: flex; justify-content: space-between; line-height: 19px; }
.machine { flex: 1; padding-top: 8px; }
.controls { display: flex; align-items: center; height: 35px; background: #45597c; padding: 0 6px 0 8px; }
.speed { flex: 1; }
.lamps { display: flex; margin: 0 4px 0 8px; }
.lamp { width: 40px; text-align: center; border-left: 1px solid #2c3c58; color: #fff; font-size: 9px; line-height: 10px; }
.lamp i { display: block; width: 18px; height: 18px; margin: 0 auto; border-radius: 50%; border: 3px solid #a8b0b8; background: radial-gradient(#0c5018, #042808); }
.lamp i.lit { background: radial-gradient(circle at 40% 40%, #e0ffb0, #48e010 60%, #20a000); }
.progress { width: 494px; height: 26px; background: #d9a520; border: 2px solid #c0c8d0; }
.transport { display: flex; gap: 10px; margin-left: 5px; }
.transport button { width: 24px; height: 24px; border-radius: 50%; background: linear-gradient(#fff, #b8c0cc); border: 1px solid #8894a8; }
.message { height: 16px; background: #ffe6a0; }
.taskbar { height: 5px; background: #1c1f22; }

input[type="range"] { appearance: none; height: 22px; margin: 0; background: none; min-width: 0; }
input[type="range"]::-webkit-slider-runnable-track { height: 4px; background: #e8e8e8; border: 1px solid #d4d4d4; }
input[type="range"]::-webkit-slider-thumb { appearance: none; width: 5px; height: 22px; margin-top: -10px; background: #0078d7; }

.force { position: absolute; left: 2px; right: 616px; top: 3px; bottom: 70px; display: flex; flex-direction: column; background: #f0f0f0; border: solid #45597c; border-width: 1px 1px 1px 2px; outline: 1px solid #e8ecf4; }
.force-head { display: flex; align-items: center; gap: 4px; height: 26px; flex: none; padding: 0 16px 0 4px; color: #fff; background: linear-gradient(#2c3a54, #50648c); }
.force-head h1 { flex: 1; }
.row { flex: none; display: flex; align-items: center; height: 25px; }
.row.axis { height: 26px; }
.centre { justify-content: center; }
.files { display: grid; grid-template-columns: 142px 24px 117px 1fr 24px; padding: 0 3px 0 4px; }
.import { padding-left: 27px; }
.files > .tool:first-of-type { margin-left: -1px; }
.path { height: 22px; min-width: 0; margin-right: 4px; border: 1px solid #adadad; background: #f0f0f0; }
.tick { display: inline-flex; align-items: center; gap: 4px; white-space: nowrap; }
.tick input { appearance: none; flex: none; position: relative; width: 13px; height: 13px; margin: 0; border: 1px solid #333; background: #fff; }
.tick input:checked::after { content: ""; position: absolute; left: 3px; top: 0; width: 4px; height: 8px; border: solid #333; border-width: 0 1px 1px 0; transform: rotate(40deg); }
.ticks { display: flex; gap: 9px; }
.tool { width: 24px; height: 24px; background: #e1e1e1; border: 1px solid #adadad; flex: none; }
.axis { gap: 5px; padding-right: 3px; }
.pick { position: relative; display: inline-flex; }
.pick select { appearance: none; width: 100%; height: 22px; padding: 0 4px; border: 1px solid #adadad; border-radius: 0; background: #e1e1e1; font: inherit; color: inherit; }
.pick svg { position: absolute; right: 5px; top: 9px; fill: none; stroke: #444; pointer-events: none; }
.tc { width: 148px; }
.xa { width: 86px; }
.un { width: 62px; margin-right: 2px; }
.review { flex: none; display: flex; align-items: center; justify-content: center; gap: 5px; height: 28px; background: #00d8ff; }
.review strong { font-size: 15px; }

.body { flex: 1; min-height: 0; display: flex; padding-top: 1px; }
.data { flex: none; width: 246px; margin: 4px 2px 3px 2px; padding: 3px 6px 0 5px; border: 2px solid #888; border-right-color: #999; min-width: 0; }
.data legend { margin: 0 auto; padding: 0 2px; line-height: 16px; }
.mode { color: #1cc8f0; font-size: 16px; line-height: 20px; text-align: center; }
.data section + section { margin-top: 8px; }
.data h2 { font-size: 14px; font-weight: bold; line-height: 22px; }
.data dl { display: grid; grid-template-columns: 114px 1fr; line-height: 24px; padding-left: 5px; }
.data dt, .data dd { white-space: nowrap; overflow: hidden; min-width: 0; }

.right { flex: 1; min-width: 0; display: flex; flex-direction: column; padding-top: 11px; }
.charts { flex: 1; min-height: 0; display: flex; flex-direction: column; background: #d2d2d2; }
.chart { flex: 1; width: 100%; min-height: 0; }
.chart .title { font-size: 14px; font-weight: bold; text-anchor: middle; }
.chart .axis-name { font-size: 13px; font-weight: bold; text-anchor: middle; }
.axis-text { font-weight: bold; }
.axis-text .mid { text-anchor: middle; }
.crisp, .grid path { shape-rendering: crispEdges; }
.grid path { stroke: #ccc; stroke-width: 1; stroke-dasharray: 4 4; }
.trace path { fill: none; stroke-width: 2; stroke-linejoin: round; vector-effect: non-scaling-stroke; }
.zoombar { display: flex; align-items: center; gap: 3px; height: 28px; padding: 0 6px 0 1px; }
.zoombar input { flex: 1; margin-left: 5px; }
</style>
